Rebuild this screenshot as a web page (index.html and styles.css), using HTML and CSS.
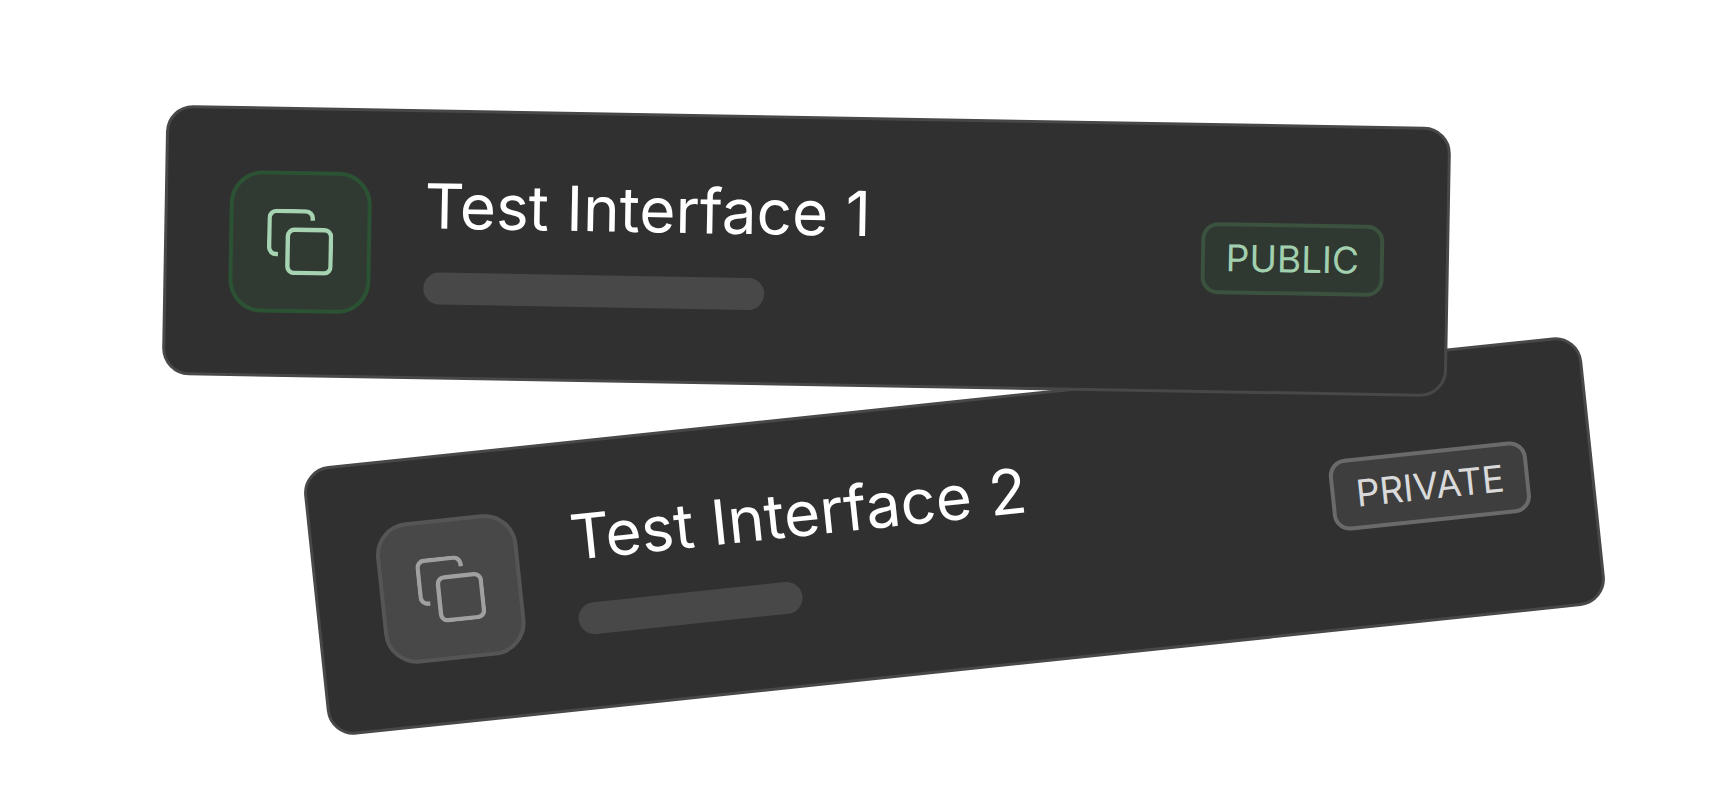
FILE: index.html
```html
<!DOCTYPE html>
<html lang="en">
<head>
<meta charset="utf-8">
<meta name="viewport" content="width=device-width, initial-scale=1">
<title>Interfaces</title>
<link rel="stylesheet" href="styles.css">
</head>
<body>
<main class="scene">
  <article class="card card-public">
    <div class="tile tile-public">
      <svg class="icon" viewBox="0 0 66 66" fill="none" stroke="currentColor" stroke-width="4.4" aria-hidden="true">
        <path d="M45.3 11.4V9.1a7 7 0 0 0-7-7H9.1a7 7 0 0 0-7 7v29.2a7 7 0 0 0 7 7h2"/>
        <rect x="20.7" y="20.7" width="43.2" height="43.2" rx="6.6"/>
      </svg>
    </div>
    <div class="info">
      <h2 class="title">Test Interface 1</h2>
      <div class="bar bar-long"></div>
    </div>
    <span class="badge badge-public">PUBLIC</span>
  </article>
  <article class="card card-private">
    <div class="tile tile-private">
      <svg class="icon" viewBox="0 0 66 66" fill="none" stroke="currentColor" stroke-width="4.4" aria-hidden="true">
        <path d="M45.3 11.4V9.1a7 7 0 0 0-7-7H9.1a7 7 0 0 0-7 7v29.2a7 7 0 0 0 7 7h2"/>
        <rect x="20.7" y="20.7" width="43.2" height="43.2" rx="6.6"/>
      </svg>
    </div>
    <div class="info">
      <h2 class="title">Test Interface 2</h2>
      <div class="bar bar-short"></div>
    </div>
    <span class="badge badge-private">PRIVATE</span>
  </article>
</main>
</body>
</html>
```
FILE: styles.css
```css
* {
  box-sizing: border-box;
}

body {
  margin: 0;
  background: #fff;
  font-family: Inter, "Liberation Sans", sans-serif;
  overflow: hidden;
}

.scene {
  display: flex;
  flex-direction: column;
  gap: 15px;
  padding: 116px 0;
}

.card {
  display: flex;
  align-items: center;
  gap: 53px;
  width: 74.5%;
  padding: 61px 62px;
  border: 3px solid #484848;
  border-radius: 27px;
  background: #303030;
}

.card-public {
  z-index: 1;
  margin-left: 9.5%;
  transform: rotate(1deg);
}

.card-private {
  margin-left: 18.1%;
  transform: rotate(-6deg);
}

.tile {
  display: flex;
  flex: none;
  align-items: center;
  justify-content: center;
  width: 142px;
  height: 142px;
  border: 4px solid;
  border-radius: 33px;
}

.tile-public {
  border-color: #2c5234;
  background: #313a32;
  color: #a6d3b1;
}

.tile-private {
  border-color: #555;
  background: #484848;
  color: #a0a0a0;
}

.icon {
  width: 66px;
  height: 66px;
}

.info {
  display: flex;
  flex: 1;
  flex-direction: column;
  align-self: flex-start;
  gap: 33px;
}

.title {
  margin: 0;
  color: #fff;
  font-size: 62px;
  font-weight: 400;
  line-height: 66px;
  white-space: nowrap;
}

.bar {
  height: 32px;
  border-radius: 16px;
  background: #484848;
}

.bar-long {
  width: 341px;
}

.bar-short {
  width: 225px;
}

.badge {
  flex: none;
  padding: 8px 21px;
  border: 4px solid;
  border-radius: 17px;
  font-size: 37px;
  line-height: 48px;
}

.badge-public {
  border-color: #3a523e;
  background: #2f3932;
  color: #a2cfae;
}

.badge-private {
  border-color: #6a6a6a;
  background: #3e3e3e;
  color: #d9d9d9;
}
```
